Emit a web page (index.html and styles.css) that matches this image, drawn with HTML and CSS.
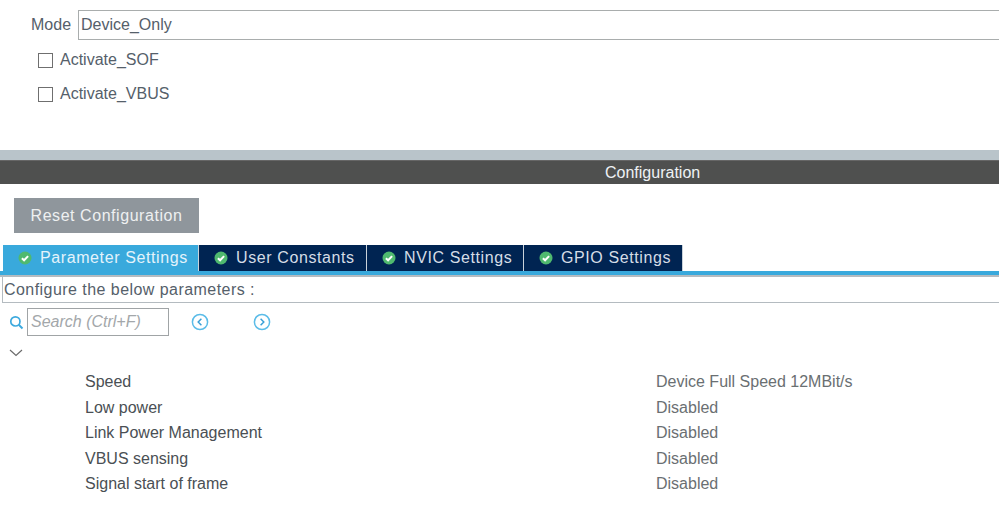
FILE: index.html
```html
<!DOCTYPE html>
<html lang="en">
<head>
<meta charset="utf-8">
<title>USB Configuration</title>
<link rel="stylesheet" href="styles.css">
</head>
<body>
<section class="mode">
  <div class="mode-row">
    <span class="mode-label">Mode</span>
    <div class="mode-field">Device_Only</div>
  </div>
  <label class="check-row"><span class="check"></span>Activate_SOF</label>
  <label class="check-row"><span class="check"></span>Activate_VBUS</label>
</section>
<div class="splitter"></div>
<header class="config-title">Configuration</header>
<div class="reset-wrap"><button class="reset">Reset Configuration</button></div>
<nav class="tabs">
  <div class="tab active"><svg class="ok" viewBox="0 0 14 14"><circle cx="7" cy="7" r="6.5" fill="#4fb96f"/><path d="M3.9 7.2l2.2 2.1 4-4.2" fill="none" stroke="#fff" stroke-width="2"/></svg>Parameter Settings</div>
  <div class="tab tab-user"><svg class="ok" viewBox="0 0 14 14"><circle cx="7" cy="7" r="6.5" fill="#4fb96f"/><path d="M3.9 7.2l2.2 2.1 4-4.2" fill="none" stroke="#fff" stroke-width="2"/></svg>User Constants</div>
  <div class="tab tab-nvic"><svg class="ok" viewBox="0 0 14 14"><circle cx="7" cy="7" r="6.5" fill="#4fb96f"/><path d="M3.9 7.2l2.2 2.1 4-4.2" fill="none" stroke="#fff" stroke-width="2"/></svg>NVIC Settings</div>
  <div class="tab tab-gpio"><svg class="ok" viewBox="0 0 14 14"><circle cx="7" cy="7" r="6.5" fill="#4fb96f"/><path d="M3.9 7.2l2.2 2.1 4-4.2" fill="none" stroke="#fff" stroke-width="2"/></svg>GPIO Settings</div>
</nav>
<div class="tab-rule"></div>
<div class="hint">Configure the below parameters :</div>
<div class="search-row">
  <svg class="search-icon" viewBox="0 0 16 16"><circle cx="6.8" cy="6.8" r="4.9" fill="none" stroke="#3ca9de" stroke-width="1.8"/><path d="M10.4 10.4l4 4" stroke="#3ca9de" stroke-width="2"/></svg>
  <div class="search-box">Search (Ctrl+F)</div>
  <svg class="nav-icon nav-prev" viewBox="0 0 18 18"><circle cx="9" cy="9" r="7.6" fill="none" stroke="#5bbce8" stroke-width="1.5"/><path d="M10.4 5.8L7.2 9l3.2 3.2" fill="none" stroke="#3a9fd6" stroke-width="1.5"/></svg>
  <svg class="nav-icon nav-next" viewBox="0 0 18 18"><circle cx="9" cy="9" r="7.6" fill="none" stroke="#5bbce8" stroke-width="1.5"/><path d="M7.6 5.8L10.8 9l-3.2 3.2" fill="none" stroke="#3a9fd6" stroke-width="1.5"/></svg>
</div>
<svg class="chevron" viewBox="0 0 14 8"><path d="M1 1l6 5.5L13 1" fill="none" stroke="#6b6b6b" stroke-width="1.2"/></svg>
<div class="params">
  <div class="param"><span class="p-name">Speed</span><span class="p-val">Device Full Speed 12MBit/s</span></div>
  <div class="param"><span class="p-name">Low power</span><span class="p-val">Disabled</span></div>
  <div class="param"><span class="p-name">Link Power Management</span><span class="p-val">Disabled</span></div>
  <div class="param"><span class="p-name">VBUS sensing</span><span class="p-val">Disabled</span></div>
  <div class="param"><span class="p-name">Signal start of frame</span><span class="p-val">Disabled</span></div>
</div>
</body>
</html>
```
FILE: styles.css
```css
* { box-sizing: border-box; }
html, body { margin: 0; padding: 0; }
body {
  width: 999px;
  height: 529px;
  overflow: hidden;
  background: #fff;
  font-family: "Liberation Sans", Arial, sans-serif;
  font-size: 16px;
  color: #4a4a4a;
}
.mode { height: 150px; padding-top: 10px; }
.mode-row { display: flex; align-items: center; height: 30px; padding-left: 31px; }
.mode-label { width: 47px; color: #55606a; }
.mode-field {
  flex: 1;
  height: 30px;
  line-height: 27px;
  padding-left: 2px;
  border: 1px solid #a9adad;
  border-width: 1px 0 1px 1px;
  color: #55606a;
}
.check-row { display: flex; align-items: center; height: 20px; padding-left: 38px; color: #55606a; margin-top: 10px; }
.mode-row + .check-row { margin-top: 10px; }
.check-row + .check-row { margin-top: 14px; }
.check { width: 15px; height: 15px; border: 1.5px solid #6f6f6f; margin-right: 7px; }
.splitter { height: 10px; background: #b9c4ca; }
.config-title {
  height: 24px;
  line-height: 24px;
  background: #4f504f;
  color: #eef2f4;
  padding-left: 605px;
  border-top: 1px solid #666;
}
.reset-wrap { padding: 14px 0 0 14px; height: 61px; }
.reset {
  display: block;
  width: 185px;
  height: 35px;
  border: 0;
  background: #8f969c;
  color: #eef0f1;
  font: 16px "Liberation Sans", Arial, sans-serif;
  letter-spacing: 0.55px;
  padding: 0;
}
.tabs { display: flex; height: 26px; padding-left: 3px; }
.tab {
  display: flex;
  align-items: center;
  height: 26px;
  background: #002452;
  color: #d5dde6;
  letter-spacing: 0.6px;
  border-right: 1px solid #c9d2da;
  padding-left: 15px;
  white-space: nowrap;
}
.tab.active { width: 196px; background: #39a9dc; color: #e4f3fb; }
.tab-user { width: 168px; }
.tab-nvic { width: 157px; }
.tab-gpio { width: 159px; }
.ok { width: 14px; height: 14px; margin-right: 8px; flex: none; }
.tab-rule { height: 6px; border-top: 4px solid #39a9dc; border-bottom: 2px solid #b4bbc0; }
.hint {
  height: 26px;
  line-height: 26px;
  margin-left: 2px;
  padding-left: 1px;
  border: 1px solid #b4bbc0;
  border-right: 0;
  border-top: 0;
  color: #55606a;
  letter-spacing: 0.45px;
}
.search-row { display: flex; align-items: center; height: 30px; margin-top: 4px; padding-left: 9px; }
.search-icon { width: 15px; height: 15px; margin-right: 3px; flex: none; }
.search-box {
  width: 142px;
  height: 28px;
  line-height: 26px;
  padding-left: 3px;
  border: 1px solid #a0a4a6;
  color: #a3a7aa;
  font-style: italic;
}
.nav-icon { width: 18px; height: 18px; flex: none; }
.nav-prev { margin-left: 22px; }
.nav-next { margin-left: 44px; }
.chevron { display: block; width: 14px; height: 8px; margin: 12px 0 0 9px; }
.params { margin-top: 12px; }
.param { display: flex; height: 25.6px; line-height: 25.6px; padding-left: 85px; }
.p-name { width: 571px; color: #4a4f54; }
.p-val { color: #6a6f72; }
```
